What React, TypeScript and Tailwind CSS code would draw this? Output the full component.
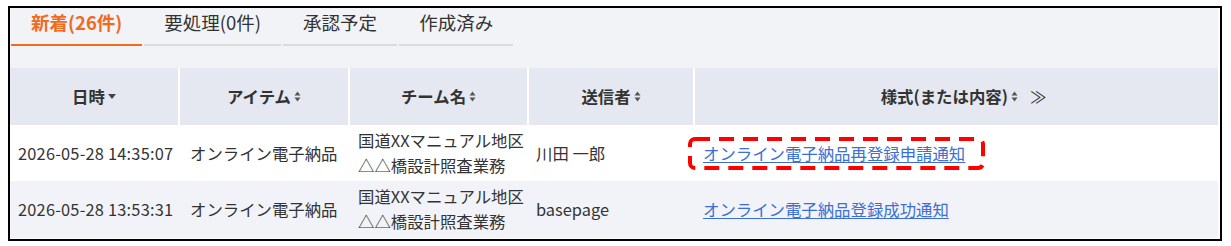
import { clsx } from "clsx";

// ── Sort icons ────────────────────────────────────────────────
function SortBoth() {
  return (
    <svg width="7" height="11" viewBox="0 0 7 11" className="ml-[3px] inline-block">
      <path d="M3.5 0.5 L6.5 4.5 H0.5 Z" fill="#555" />
      <path d="M3.5 10.5 L6.5 6.5 H0.5 Z" fill="#555" />
    </svg>
  );
}

function SortDown() {
  return (
    <svg width="8" height="5" viewBox="0 0 8 5" className="ml-[3px] inline-block">
      <path d="M0 0 H8 L4 5 Z" fill="#444" />
    </svg>
  );
}

// ── Tabs ──────────────────────────────────────────────────────
const tabs = [
  { label: "新着(26件)", active: true },
  { label: "要処理(0件)" },
  { label: "承認予定" },
  { label: "作成済み" },
];

function Tabs() {
  return (
    <div className="flex gap-[2px] pl-px">
      {tabs.map((t) => (
        <div
          key={t.label}
          className={clsx(
            "px-5 pb-2 text-[18.5px] leading-[28px] border-b-2",
            t.active
              ? "border-[#f26a1b] font-bold text-[#f26a1b]"
              : "border-[#dadbde] text-[#333]",
          )}
        >
          {t.label}
        </div>
      ))}
    </div>
  );
}

// ── Table ─────────────────────────────────────────────────────
const cols = "grid grid-cols-[168px_170px_179px_166px_1fr]";

const rows = [
  { date: "2026-05-28 14:35:07", item: "オンライン電子納品", sender: "川田 一郎", link: "オンライン電子納品再登録申請通知", marked: true },
  { date: "2026-05-28 13:53:31", item: "オンライン電子納品", sender: "basepage", link: "オンライン電子納品登録成功通知" },
];

function HeaderCell({ children, first }: { children: React.ReactNode; first?: boolean }) {
  return (
    <div className={clsx("flex items-center justify-center font-bold text-[#333]", !first && "border-l-2 border-white")}>
      {children}
    </div>
  );
}

export default function App() {
  return (
    <div className="pt-[6px] pl-2" style={{ fontFamily: '"Noto Sans CJK JP", "Noto Sans", sans-serif' }}>
      <div className="w-[1214px] h-[235px] border-2 border-black bg-white">
        <div className="mr-[2px] h-[230px] bg-[#f2f3f7] text-[16.4px]">
          <Tabs />
          <div className="h-[22px]" />
          <div className={clsx(cols, "h-[57px] bg-[#e5e8f1]")}>
            <HeaderCell first>日時<SortDown /></HeaderCell>
            <HeaderCell>アイテム<SortBoth /></HeaderCell>
            <HeaderCell>チーム名<SortBoth /></HeaderCell>
            <HeaderCell>送信者<SortBoth /></HeaderCell>
            <HeaderCell>
              <span className="pl-[14px]">様式(または内容)</span><SortBoth />
              <span className="ml-[12px] font-normal">≫</span>
            </HeaderCell>
          </div>
          {rows.map((r, i) => (
            <div key={r.date} className={clsx(cols, "h-[56px] items-center text-[#333] leading-[25px]", i === 0 ? "bg-white" : "bg-[#f2f3f8]")}>
              <div className="pl-2 whitespace-nowrap tracking-[0.2px]">{r.date}</div>
              <div className="pl-3 whitespace-nowrap">{r.item}</div>
              <div className="pl-[10px] whitespace-nowrap">
                <div>国道XXマニュアル地区</div>
                <div>△△橋設計照査業務</div>
              </div>
              <div className="pl-[9px]">{r.sender}</div>
              <div className="pl-[10px]">
                <span className="relative inline-block text-[#3b6fd6] underline underline-offset-2">
                  {r.link}
                  {r.marked && (
                    <svg className="absolute -left-[15px] -top-[4px]" width="297" height="33" viewBox="0 0 297 33">
                      <rect x="2" y="2" width="293" height="29" rx="5" fill="none" stroke="#ff0000" strokeWidth="4" strokeDasharray="15 9" />
                    </svg>
                  )}
                </span>
              </div>
            </div>
          ))}
        </div>
      </div>
    </div>
  );
}
